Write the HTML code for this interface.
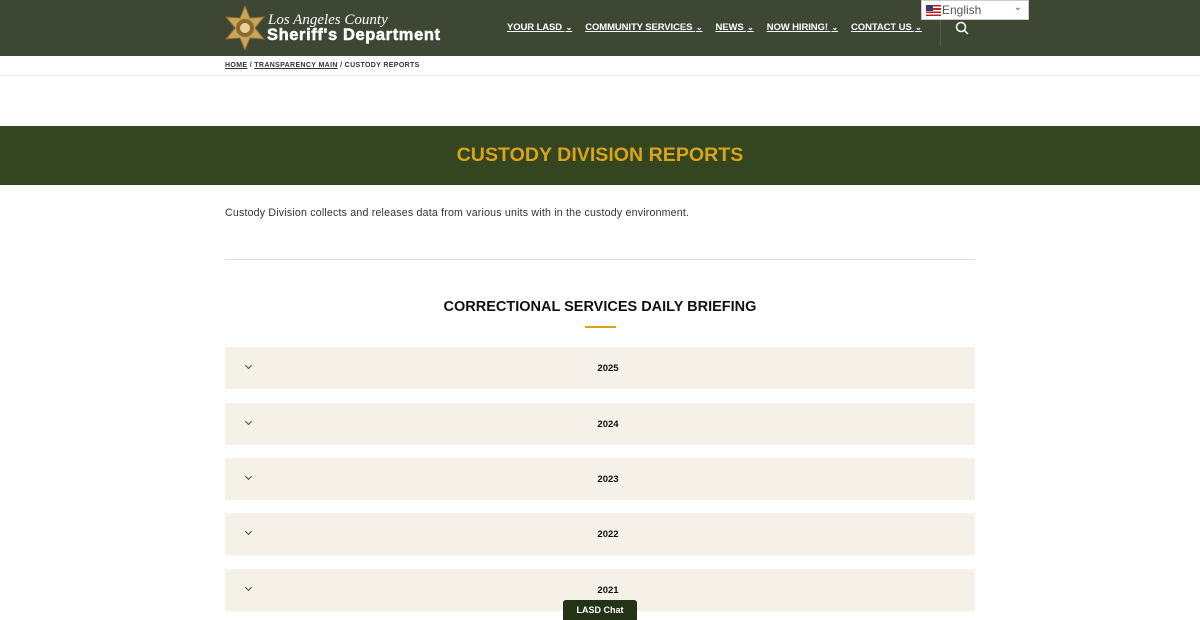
<!DOCTYPE html>
<html><head><style>
*{margin:0;padding:0;box-sizing:border-box}
body{width:1200px;height:620px;overflow:hidden;background:#fff;font-family:"Liberation Sans",sans-serif;position:relative}
.hdr{height:56px;background:#3e4734;position:relative}
.nav{position:absolute;top:22px;left:507px;font-size:9.5px;font-weight:bold;color:#fff;white-space:nowrap;letter-spacing:-.1px}
.nav span{text-decoration:underline;margin-right:13px}
.nav i{font-style:normal;font-size:8px;text-decoration:none;margin-left:1px}
.sep{position:absolute;left:940px;top:14px;width:1px;height:32px;background:#555e4a}
.tr{position:absolute;left:921px;top:0;width:108px;height:20px;background:#fff;border:1px solid #ccc;font-size:12px;color:#555;padding:2px 0 0 20px}
.flag{position:absolute;left:4px;top:4px;width:15px;height:11px;background:repeating-linear-gradient(#b22 0 1.6px,#fff 1.6px 3.2px)}
.flag:before{content:"";position:absolute;left:0;top:0;width:7px;height:6px;background:#3c3b6e}
.bc{position:absolute;top:62px;left:225px;font-size:7px;letter-spacing:.35px;color:#333;font-weight:bold}
.bc u{color:#333}
.line{position:absolute;top:75px;left:0;width:1200px;height:1px;background:#e8e8e8}
.band{position:absolute;top:126px;left:0;width:1200px;height:59px;background:#334620;color:#d9a31a;font-size:19.6px;font-weight:bold;text-align:center;line-height:59px}
.p{position:absolute;top:207px;left:225px;font-size:10.6px;color:#333;letter-spacing:.2px}
.hr{position:absolute;top:259px;left:225px;width:750px;height:1px;background:#ddd}
h2{position:absolute;top:299px;left:0;width:1200px;text-align:center;font-size:14.5px;color:#111}
.gl{position:absolute;top:326px;left:585px;width:31px;height:2px;background:#d9a31a}
.acc{position:absolute;left:225px;width:750px;height:42px;background:#f5f0e8;font-size:9.5px;font-weight:bold;text-align:center;line-height:43px;color:#111;padding-left:16px}
.acc:before{content:"";position:absolute;left:21px;top:16px;width:4px;height:4px;border-right:1px solid #444;border-bottom:1px solid #444;transform:rotate(45deg)}
.chat{position:absolute;left:563px;top:600px;width:74px;height:20px;background:#243315;color:#fff;font-size:9px;font-weight:bold;text-align:center;line-height:20px;border-radius:3px 3px 0 0}
</style></head><body>
<div class="hdr">
<svg style="position:absolute;left:225px;top:5px" width="40" height="46" viewBox="0 0 40 46"><polygon points="20,1 25,13 39,12 30,23 39,34 25,33 20,45 15,33 1,34 10,23 1,12 15,13" fill="#c9a55a" stroke="#8a6a30"/><circle cx="20" cy="23" r="9" fill="#8c6a2a"/><circle cx="20" cy="23" r="5" fill="#e6d39a"/></svg>
<div style="position:absolute;left:268px;top:12px;color:#fff;font-family:'Liberation Serif',serif;font-style:italic;font-size:15px">Los Angeles County</div>
<div style="position:absolute;left:267px;top:26px;color:#fff;font-weight:bold;font-size:16.5px;letter-spacing:.6px;-webkit-text-stroke:.5px #fff">Sheriff's Department</div>
<div class="nav"><span>YOUR LASD <i>⌄</i></span><span>COMMUNITY SERVICES <i>⌄</i></span><span>NEWS <i>⌄</i></span><span>NOW HIRING! <i>⌄</i></span><span>CONTACT US <i>⌄</i></span></div>
<div class="sep"></div>
<svg style="position:absolute;left:955px;top:21px" width="14" height="14" viewBox="0 0 14 14"><circle cx="6" cy="6" r="4.5" fill="none" stroke="#fff" stroke-width="1.5"/><line x1="9.3" y1="9.3" x2="13" y2="13" stroke="#fff" stroke-width="1.5"/></svg>
</div>
<div class="tr"><div class="flag"></div>English<span style="position:absolute;right:6px;top:1px;font-size:10px">⌄</span></div>
<div class="bc"><u>HOME</u> / <u>TRANSPARENCY MAIN</u> / CUSTODY REPORTS</div>
<div class="line"></div>
<div class="band">CUSTODY DIVISION REPORTS</div>
<div class="p">Custody Division collects and releases data from various units with in the custody environment.</div>
<div class="hr"></div>
<h2>CORRECTIONAL SERVICES DAILY BRIEFING</h2>
<div class="gl"></div>
<div class="acc" style="top:347px">2025</div>
<div class="acc" style="top:403px">2024</div>
<div class="acc" style="top:458px">2023</div>
<div class="acc" style="top:513px">2022</div>
<div class="acc" style="top:569px">2021</div>
<div class="chat">LASD Chat</div>
</body></html>
